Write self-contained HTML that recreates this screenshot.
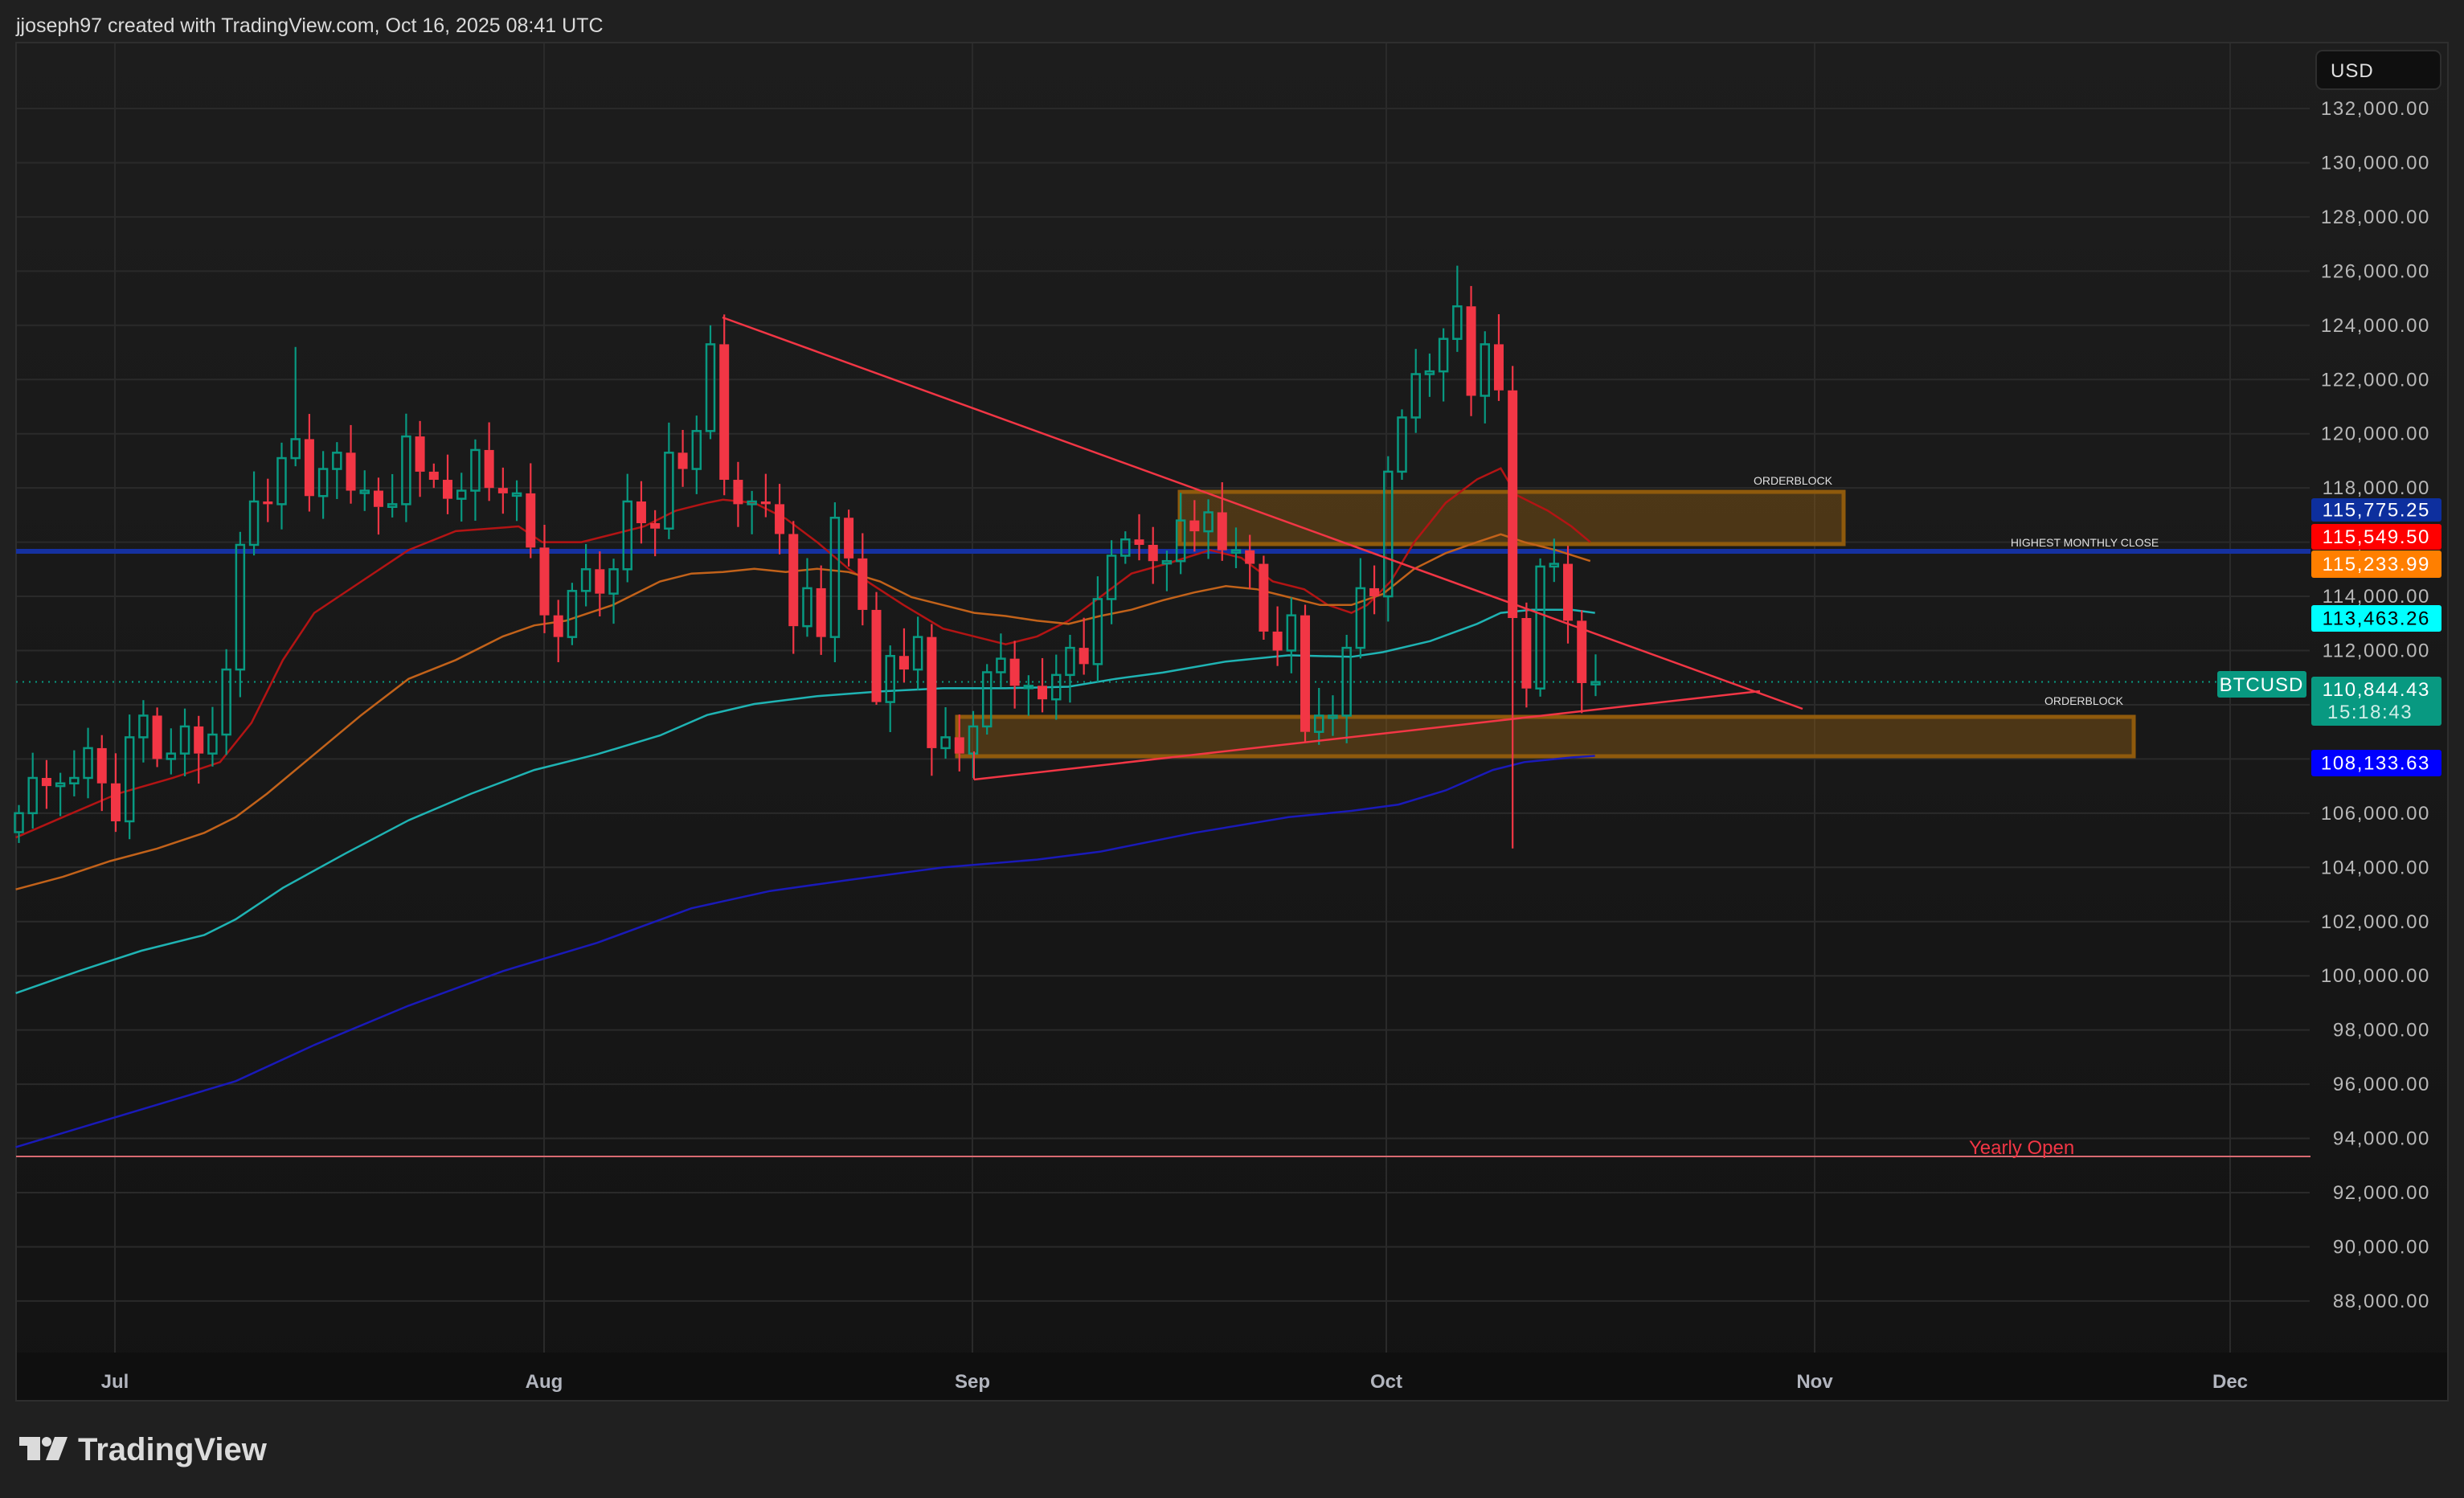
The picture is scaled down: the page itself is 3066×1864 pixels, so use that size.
<!DOCTYPE html>
<html><head><meta charset="utf-8"><style>
html,body{margin:0;padding:0;background:#202020;}
svg{display:block;font-family:"Liberation Sans",sans-serif;}
</style></head><body>
<svg id="s" width="3066" height="1864" viewBox="0 0 3066 1864" xmlns="http://www.w3.org/2000/svg">
<defs><linearGradient id="bg" x1="0" y1="0" x2="0" y2="1"><stop offset="0" stop-color="#1d1d1d"/><stop offset="1" stop-color="#131313"/></linearGradient></defs>
<rect width="3066" height="1864" fill="#202020"/>
<text x="20" y="40" font-size="25" fill="#dbdbdb">jjoseph97 created with TradingView.com, Oct 16, 2025 08:41 UTC</text>
<rect x="20" y="53" width="3026" height="1690" fill="url(#bg)" stroke="#2e2e2e" stroke-width="2"/>
<rect x="21" y="1683" width="3024" height="59" fill="#0f0f0f"/>
<g id="grid"></g>
<g id="axis"></g>
<g id="ob">
<rect x="1468" y="612" width="826" height="65" fill="#8b5a14" fill-opacity="0.45" stroke="#8f5a0c" stroke-width="5"/>
<rect x="1191" y="892" width="1464" height="49" fill="#8b5a14" fill-opacity="0.45" stroke="#8f5a0c" stroke-width="5"/>
</g>
<line x1="20" y1="686" x2="2875" y2="686" stroke="#1531a0" stroke-width="6"/>
<line x1="20" y1="1439" x2="2875" y2="1439" stroke="#d86a72" stroke-width="2"/>
<text x="2450" y="1436" font-size="24" fill="#f23645">Yearly Open</text>
<line x1="20" y1="848.5" x2="2759" y2="848.5" stroke="#089981" stroke-width="2" stroke-dasharray="2,6"/>
<g id="ma" fill="none" stroke-width="2.5"></g>
<g id="cd"></g>
<line x1="899" y1="395" x2="2243" y2="882" stroke="#f23645" stroke-width="2.5"/>
<line x1="1212" y1="970" x2="2190" y2="860" stroke="#f23645" stroke-width="2.5"/>
<line x1="1212" y1="970" x2="1212" y2="935" stroke="#f23645" stroke-width="2"/>
<g font-size="14" fill="#e0e0e0" text-anchor="middle">
<text x="2231" y="603">ORDERBLOCK</text>
<text x="2594" y="680">HIGHEST MONTHLY CLOSE</text>
<text x="2593" y="877">ORDERBLOCK</text>
</g>
<rect x="2759" y="835" width="111" height="33" rx="3" fill="#089981"/>
<text x="2814" y="860" font-size="24" fill="#fff" text-anchor="middle" letter-spacing="1">BTCUSD</text>
<g id="lab" font-size="24" letter-spacing="1.6"></g>
<rect x="2882" y="63" width="155" height="48" rx="8" fill="#0f0f0f" stroke="#2e2e2e" stroke-width="2"/>
<text x="2900" y="96" font-size="24" fill="#e0e0e0" letter-spacing="1">USD</text>
<g font-size="24" font-weight="bold" fill="#b2b5be" text-anchor="middle">
<text x="143" y="1727">Jul</text><text x="677" y="1727">Aug</text><text x="1210" y="1727">Sep</text><text x="1725" y="1727">Oct</text><text x="2258" y="1727">Nov</text><text x="2775" y="1727">Dec</text>
</g>
<g fill="#dbdbdb">
<path d="M24 1788 H50 V1817 H34 V1799 H24 Z"/>
<circle cx="58" cy="1794" r="6"/>
<path d="M68 1788 H84 L73 1817 H57 Z"/>
<text x="97" y="1817" font-size="40" font-weight="bold">TradingView</text>
</g>
</svg>
<script>
var NS="http://www.w3.org/2000/svg",S=3066/1568;
function el(p,t,a,txt){var e=document.createElementNS(NS,t);for(var k in a)e.setAttribute(k,a[k]);if(txt!=null)e.textContent=txt;document.getElementById(p).appendChild(e);return e;}
function Y(p){return 135+(132-p)*33.725;}
function X(i){return 23.5+17.21*i;}
for(var v=88;v<=132;v+=2){var y=Y(v);el("grid","line",{x1:21,y1:y,x2:2874,y2:y,stroke:"#2a2a2a","stroke-width":2});
el("axis","text",{x:3024,y:y+8,"font-size":24,fill:"#b8b8b8","text-anchor":"end","letter-spacing":1.6},v+",000.00");}
[143,677,1210,1725,2258,2775].forEach(function(x){el("grid","line",{x1:x,y1:54,x2:x,y2:1683,stroke:"#2a2a2a","stroke-width":2});});
var mas=[["#b31414",[[10,533],[40,520],[75,505],[110,495],[140,485],[160,460],[180,420],[200,390],[230,370],[260,350],[290,338],[330,335],[345,345],[370,345],[410,335],[430,325],[450,320],[460,318],[480,320],[500,330],[520,345],[540,362],[555,372],[575,385],[600,400],[620,405],[640,410],[660,405],[680,395],[700,380],[720,365],[745,358],[770,350],[790,355],[810,370],[830,375],[845,385],[860,390],[870,385],[885,370],[900,345],[920,320],[940,305],[955,298],[965,315],[985,325],[1000,335],[1012,345]]],
["#c2621a",[[10,566],[40,558],[70,548],[100,540],[130,530],[150,520],[170,505],[200,480],[230,455],[260,432],[290,420],[320,405],[340,398],[360,395],[390,385],[420,370],[440,365],[460,364],[480,362],[500,364],[520,362],[540,364],[560,370],[580,380],[600,385],[620,390],[640,392],[660,395],[680,397],[700,392],[720,388],[740,382],[760,377],[780,373],[800,375],[820,380],[840,385],[860,385],[880,378],[900,362],[920,352],[940,345],[955,340],[970,345],[990,350],[1012,357]]],
["#1fb3b3",[[10,632],[50,618],[90,605],[130,595],[150,585],[180,565],[220,543],[260,522],[300,505],[340,490],[380,480],[420,468],[450,455],[480,448],[520,443],[560,440],[600,438],[640,438],[680,437],[710,432],[740,428],[780,421],[820,417],[860,418],[880,415],[910,408],[940,397],[955,390],[975,388],[1000,388],[1015,390]]],
["#1a1ab8",[[10,730],[60,715],[110,700],[150,688],[200,665],[260,640],[320,618],[380,600],[440,578],[490,567],[540,560],[600,552],[660,547],[700,542],[760,530],[820,520],[860,516],[890,512],[920,503],[950,490],[970,485],[1000,482],[1015,481]]]];
mas.forEach(function(m){el("ma","polyline",{stroke:m[0],points:m[1].map(function(p){return (p[0]*S).toFixed(1)+","+(p[1]*S).toFixed(1)}).join(" ")});});
var c=[106.0,107.3,107.0,107.1,107.3,108.4,107.1,
105.7,108.8,109.6,108.0,108.2,109.2,108.2,108.9,111.3,115.9,117.5,117.4,119.1,119.8,117.7,118.7,119.3,117.9,117.9,117.3,117.4,119.9,118.6,118.3,117.6,117.9,119.4,118.0,117.8,117.8,115.8,
113.3,112.5,114.2,115.0,114.1,115.0,117.5,116.7,116.5,119.3,118.7,120.1,123.3,118.3,117.4,117.5,117.4,116.3,112.9,114.3,112.5,116.9,115.4,113.5,110.1,111.8,111.3,112.5,108.4,108.8,108.2,
109.2,111.2,111.7,110.7,110.7,110.2,111.1,112.1,111.5,113.9,115.5,116.1,115.9,115.3,115.3,116.8,116.4,117.1,115.7,115.7,115.2,112.7,112.0,113.3,109.0,109.6,109.6,112.1,114.3,114.0,
118.6,120.6,122.2,122.3,123.5,124.7,121.4,123.3,121.6,113.2,110.6,115.1,115.2,113.1,110.8,110.84];
var hiO={20:123.2,51:124.4,50:124.0,104:126.2,108:122.5},loO={108:104.7,69:107.3,62:110.0,93:108.6,109:109.9,0:104.9};
var prev=105.3;
for(var i=0;i<c.length;i++){var o=prev,cl=c[i];prev=cl;
var hi=Math.max(o,cl)+0.3+((i*37)%10)/10*0.9,lo=Math.min(o,cl)-0.3-((i*53)%10)/10*0.9;
if(hiO[i])hi=hiO[i];if(loO[i])lo=loO[i];
var x=X(i),up=cl>=o,col=up?"#089981":"#f23645";
var t=Y(Math.max(o,cl)),b=Y(Math.min(o,cl));if(b-t<3){b=t+3;}
el("cd","line",{x1:x,y1:Y(hi),x2:x,y2:t,stroke:col,"stroke-width":2.2});
el("cd","line",{x1:x,y1:b,x2:x,y2:Y(lo),stroke:col,"stroke-width":2.2});
if(up)el("cd","rect",{x:x-5,y:t,width:10,height:b-t,fill:"none",stroke:col,"stroke-width":2.5});
else el("cd","rect",{x:x-6,y:t,width:12,height:b-t,fill:col});}
[[620,649,"#0d2f9e","#fff","115,775.25"],[652,684,"#ff0000","#fff","115,549.50"],[685,719,"#ff7f00","#fff","115,233.99"],[753,786,"#00ffff","#000","113,463.26"],[933,966,"#0000ff","#fff","108,133.63"]].forEach(function(l){
el("lab","rect",{x:2876,y:l[0],width:162,height:l[1]-l[0],rx:3,fill:l[2]});
el("lab","text",{x:3024,y:(l[0]+l[1])/2+8,fill:l[3],"text-anchor":"end"},l[4]);});
el("lab","rect",{x:2876,y:842,width:162,height:61,rx:3,fill:"#089981"});
el("lab","text",{x:3024,y:866,fill:"#fff","text-anchor":"end"},"110,844.43");
el("lab","text",{x:2896,y:894,fill:"#cfeee8"},"15:18:43");
</script>
</body></html>
